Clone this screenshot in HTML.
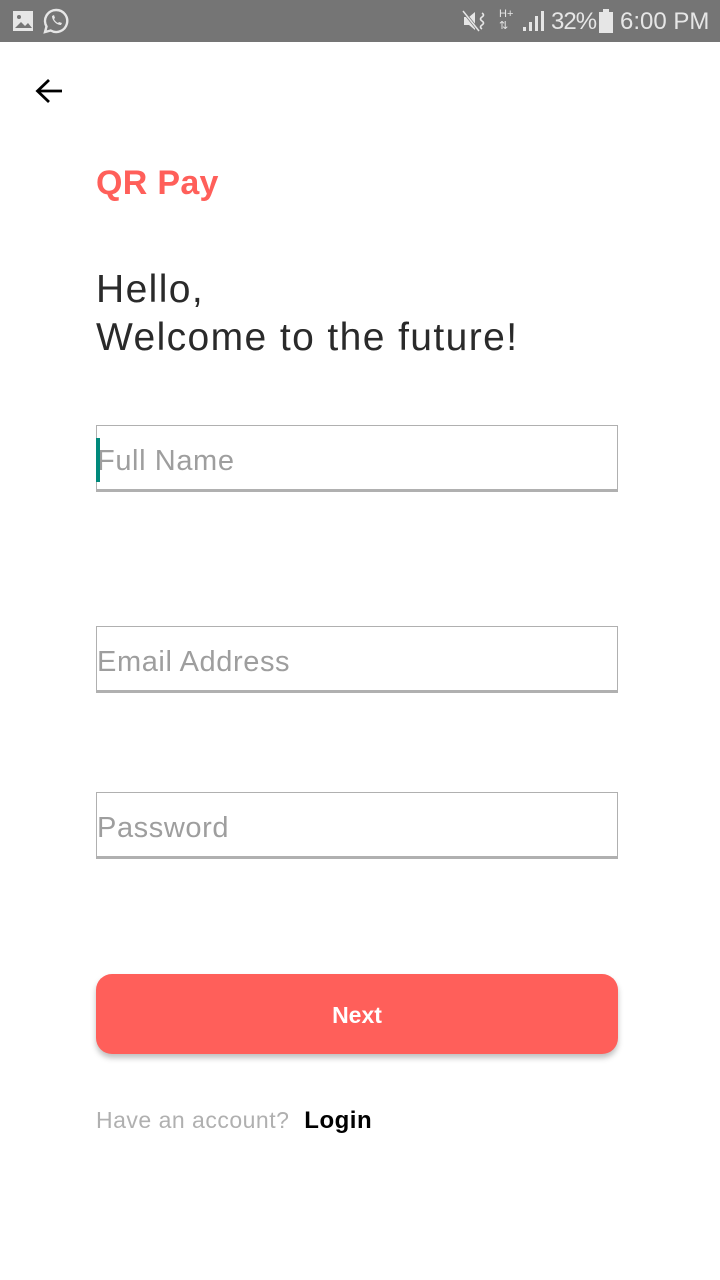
<!DOCTYPE html>
<html><head><meta charset="utf-8"><style>
*{margin:0;padding:0;box-sizing:border-box}
body{width:720px;height:1280px;background:#fff;font-family:"Liberation Sans",sans-serif;position:relative;overflow:hidden}
.sb{position:absolute;left:0;top:0;width:720px;height:42px;background:#757575;color:#e6e6e6;font-size:25px}
.abs{position:absolute}
.inp{position:absolute;left:96px;width:522px;border:1px solid #b0b0b0;border-bottom:3px solid #b0b0b0;color:#9e9e9e;font-size:29px;padding-left:0;letter-spacing:0.6px}
</style></head><body>
<div class="sb">
<svg class="abs" style="left:12px;top:10px" width="22" height="22" viewBox="0 0 22 22"><rect x="1" y="1" width="20" height="20" fill="#e6e6e6"/><circle cx="7" cy="7" r="2" fill="#757575"/><path d="M3 18l6-6 4 4 3-3 4 5z" fill="#757575"/></svg>
<svg class="abs" style="left:43px;top:8px" width="26" height="26" viewBox="0 0 26 26"><path d="M13 2a11 11 0 0 0-9.5 16.5L2 24l5.7-1.5A11 11 0 1 0 13 2z" fill="none" stroke="#e6e6e6" stroke-width="2.4"/><path d="M9 8c0 4 4 9 9 9l1-2-3-1-1 1c-2-1-3-2-4-4l1-1-1-3z" fill="#e6e6e6"/></svg>
<svg class="abs" style="left:462px;top:10px" width="26" height="22" viewBox="0 0 26 22"><path d="M2 7h5l6-5v18l-6-5H2z" fill="#e6e6e6"/><path d="M1 1l16 20" stroke="#757575" stroke-width="3"/><path d="M1 1l16 20" stroke="#e6e6e6" stroke-width="1.5"/><path d="M20 3q3 2 0 4q-3 2 0 4q3 2 0 4q-3 2 0 4" fill="none" stroke="#e6e6e6" stroke-width="1.6"/></svg>
<div class="abs" style="left:499px;top:8px;font-size:11px;line-height:12px">H+<br>⇅</div>
<svg class="abs" style="left:522px;top:10px" width="24" height="22"><rect x="1" y="17" width="3" height="4" fill="#e6e6e6"/><rect x="7" y="12" width="3" height="9" fill="#e6e6e6"/><rect x="13" y="6" width="3" height="15" fill="#e6e6e6"/><rect x="19" y="1" width="3" height="20" fill="#e6e6e6"/></svg>
<div class="abs" style="left:551px;top:8px;font-size:24px;letter-spacing:-1px">32%</div>
<svg class="abs" style="left:599px;top:9px" width="14" height="24"><rect x="4" y="0" width="6" height="3" fill="#e6e6e6"/><rect x="0" y="3" width="14" height="21" fill="#e6e6e6"/></svg>
<div class="abs" style="left:620px;top:8px;font-size:24px">6:00 PM</div>
</div>
<svg class="abs" style="left:34px;top:77px" width="30" height="30" viewBox="0 0 30 30"><path d="M28 14H5M15 3L3.5 14 15 25" fill="none" stroke="#000" stroke-width="2.8"/></svg>
<div class="abs" style="left:96px;top:164px;font-size:34px;font-weight:bold;color:#ff5f5a;letter-spacing:0.3px">QR Pay</div>
<div class="abs" style="left:96px;top:266px;font-size:39px;color:#2a2a2a;line-height:48px;letter-spacing:1.4px">Hello,<br>Welcome to the future!</div>
<div class="inp" style="top:425px;height:67px;line-height:70px"><span class="abs" style="left:-1px;top:12px;width:4px;height:44px;background:#00897b"></span>Full Name</div>
<div class="inp" style="top:626px;height:67px;line-height:70px">Email Address</div>
<div class="inp" style="top:792px;height:67px;line-height:70px">Password</div>
<div class="abs" style="left:96px;top:974px;width:522px;height:80px;border-radius:16px;background:#ff5f5a;color:#fff;font-weight:bold;font-size:23px;text-align:center;line-height:82px;box-shadow:0 4px 6px rgba(0,0,0,0.25)">Next</div>
<div class="abs" style="left:96px;top:1107px;font-size:23px;color:#b0b0b0;letter-spacing:0.5px">Have an account? <b style="color:#000;margin-left:8px;font-size:24px">Login</b></div>
</body></html>
